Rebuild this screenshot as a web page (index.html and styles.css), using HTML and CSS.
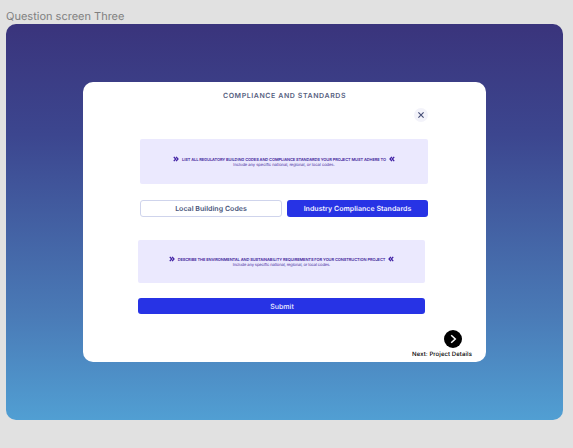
FILE: index.html
```html
<!DOCTYPE html>
<html lang="en">
<head>
<meta charset="utf-8">
<title>Question screen Three</title>
<link rel="stylesheet" href="styles.css">
</head>
<body>
<div class="frame-label">Question screen Three</div>
<main class="frame">
  <section class="card">
    <h1 class="title">COMPLIANCE AND STANDARDS</h1>
    <button class="close" aria-label="Close"><svg viewBox="0 0 14 14"><path d="M4.4 4.4l5.2 5.2M9.6 4.4L4.4 9.6"/></svg></button>
    <div class="notice">
      <div class="notice-row">
        <svg class="chevrons" viewBox="0 0 6 6"><path d="M.8 .8L2.7 3L.8 5.2M3.1 .8L5 3L3.1 5.2"/></svg>
        <strong>LIST ALL REGULATORY BUILDING CODES AND COMPLIANCE STANDARDS YOUR PROJECT MUST ADHERE TO</strong>
        <svg class="chevrons" viewBox="0 0 6 6"><path d="M2.9 .8L1 3L2.9 5.2M5.2 .8L3.3 3L5.2 5.2"/></svg>
      </div>
      <p class="hint">Include any specific national, regional, or local codes.</p>
    </div>
    <div class="options">
      <button class="button outline">Local Building Codes</button>
      <button class="button primary">Industry Compliance Standards</button>
    </div>
    <div class="notice second">
      <div class="notice-row">
        <svg class="chevrons" viewBox="0 0 6 6"><path d="M.8 .8L2.7 3L.8 5.2M3.1 .8L5 3L3.1 5.2"/></svg>
        <strong>DESCRIBE THE ENVIRONMENTAL AND SUSTAINABILITY REQUIREMENTS FOR YOUR CONSTRUCTION PROJECT</strong>
        <svg class="chevrons" viewBox="0 0 6 6"><path d="M2.9 .8L1 3L2.9 5.2M5.2 .8L3.3 3L5.2 5.2"/></svg>
      </div>
      <p class="hint">Include any specific national, regional, or local codes.</p>
    </div>
    <button class="button primary submit">Submit</button>
    <div class="next">
      <svg class="next-icon" viewBox="0 0 18 18"><circle cx="9" cy="9" r="9"/><path d="M7.2 5.2L11.3 9L7.2 12.8"/></svg>
      <span>Next: Project Details</span>
    </div>
  </section>
</main>
</body>
</html>
```
FILE: styles.css
```css
* { box-sizing: border-box; }
body {
  margin: 0;
  height: 448px;
  padding: 9px 10px 28px 6px;
  background: #e1e1e1;
  font-family: Inter, "Liberation Sans", sans-serif;
  text-rendering: geometricPrecision;
  overflow: hidden;
}
.frame-label {
  height: 15px;
  font-size: 11px;
  line-height: 15px;
  color: #808080;
  white-space: nowrap;
}
.frame {
  width: 557px;
  height: 396px;
  padding: 58px 0 0 77px;
  border-radius: 10px;
  background: linear-gradient(#3a347c, #3c468f 28%, #4a7bb7 74%, #519fd3);
}
.card {
  display: flex;
  flex-direction: column;
  width: 402.5px;
  height: 280px;
  padding: 9px 13.5px 0 55px;
  border-radius: 10px;
  background: #fff;
}
.title {
  width: 293px;
  height: 10px;
  margin: 0;
  text-align: center;
  font-size: 7px;
  line-height: 10px;
  font-weight: 600;
  letter-spacing: 0.58px;
  color: #56617f;
}
button { padding: 0; border: 0; font-family: inherit; text-rendering: inherit; }
.close {
  width: 14px;
  height: 14px;
  margin: 7px 0 0 276px;
  border-radius: 50%;
  background: #f3f3fa;
}
.close svg { display: block; width: 14px; height: 14px; fill: none; stroke: #434c75; stroke-width: 1.1; }
.notice {
  width: 288px;
  height: 45px;
  margin: 17px 0 0 2px;
  padding-top: 17px;
  border-radius: 2px;
  background: #ebe9fe;
  color: #3f249a;
}
.notice-row {
  display: flex;
  justify-content: center;
  align-items: center;
  gap: 3px;
  height: 6px;
  font-size: 4px;
  line-height: 6px;
  white-space: nowrap;
}
.notice-row strong { font-weight: 600; letter-spacing: -0.09px; padding-top: 1px; }
.chevrons { width: 6px; height: 6px; fill: none; stroke: #4222a5; stroke-width: 1.3; }
.hint {
  margin: 0;
  text-align: center;
  font-size: 4px;
  line-height: 5px;
}
.options {
  display: grid;
  grid-template-columns: 142px 141px;
  gap: 5px;
  margin: 16px 0 0 2px;
}
.button {
  height: 16.5px;
  border-radius: 3px;
  font-size: 7px;
  line-height: 17px;
  font-weight: 600;
  letter-spacing: 0.04px;
  white-space: nowrap;
}
.options .button { padding-top: 1px; line-height: 15px; }
.options .outline { border: 1px solid #cfd4ec; background: #fff; color: #49557a; line-height: 13px; }
.primary { background: #2733e5; color: #f1f2ff; }
.second { width: 287px; height: 43px; margin: 23.5px 0 0; padding-top: 16px; }
.second .hint { letter-spacing: -0.07px; }
.submit { flex: none; width: 287px; height: 15.5px; margin-top: 15px; padding: 0 0 1px 1px; font-weight: 500; }
.next {
  display: flex;
  flex-direction: column;
  align-items: center;
  align-self: flex-end;
  margin-top: 16px;
  font-size: 6px;
  line-height: 8px;
  font-weight: 500;
  letter-spacing: 0.08px;
  color: #000;
  white-space: nowrap;
}
.next span { margin-top: 3px; }
.next-icon { width: 18px; height: 18px; margin-left: 21px; }
.next-icon path { fill: none; stroke: #fff; stroke-width: 1.5; }
```
